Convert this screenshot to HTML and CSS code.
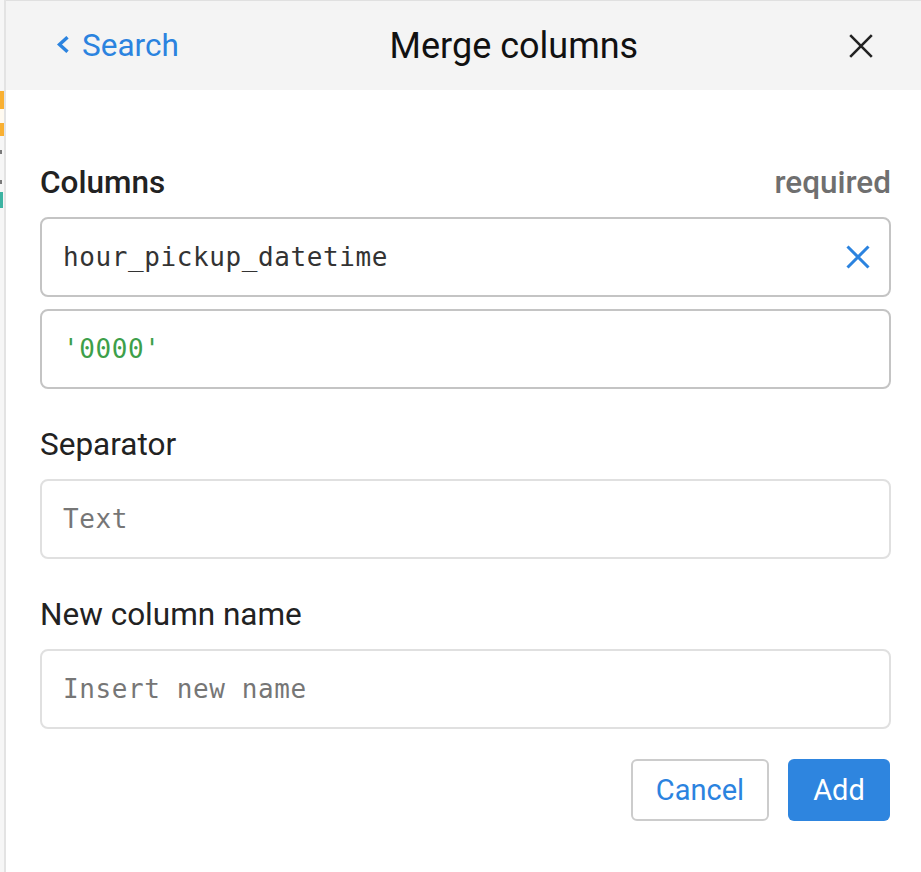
FILE: index.html
```html
<!DOCTYPE html>
<html lang="en">
<head>
<meta charset="utf-8">
<title>Merge columns</title>
<link rel="stylesheet" href="styles.css">
</head>
<body>
<div class="page">
  <div class="strip">
    <div class="mark mark-orange-1"></div>
    <div class="mark mark-white"></div>
    <div class="mark mark-orange-2"></div>
    <div class="mark mark-dot mark-dot-1"></div>
    <div class="mark mark-dot mark-dot-2"></div>
    <div class="mark mark-teal"></div>
  </div>
  <div class="panel">
    <header class="header">
      <a class="back" href="#">
        <svg class="chev" width="13" height="17" viewBox="0 0 13 17"><path d="M11.5 1.2 L3.5 8.5 L11.5 15.8" fill="none" stroke="currentColor" stroke-width="3.4" stroke-linecap="butt" stroke-linejoin="miter"/></svg>
        <span>Search</span>
      </a>
      <h1 class="title">Merge columns</h1>
      <button class="close" aria-label="Close">
        <svg width="24" height="24" viewBox="0 0 24 24"><path d="M1.2 1.2 L22.8 22.8 M22.8 1.2 L1.2 22.8" stroke="#222" stroke-width="2.6" fill="none"/></svg>
      </button>
    </header>
    <main class="body">
      <section class="group">
        <div class="label-row">
          <span class="label label-strong">Columns</span>
          <span class="required">required</span>
        </div>
        <div class="stack">
          <div class="field field-dark">
            <span class="value">hour_pickup_datetime</span>
            <svg class="clear" width="24" height="24" viewBox="0 0 24 24"><path d="M1.5 1.5 L22.5 22.5 M22.5 1.5 L1.5 22.5" stroke="#2b83df" stroke-width="3" fill="none"/></svg>
          </div>
          <div class="field field-dark">
            <span class="value value-green">'0000'</span>
          </div>
        </div>
      </section>
      <section class="group">
        <div class="label-row"><span class="label">Separator</span></div>
        <div class="field field-light"><span class="placeholder">Text</span></div>
      </section>
      <section class="group">
        <div class="label-row"><span class="label">New column name</span></div>
        <div class="field field-light"><span class="placeholder">Insert new name</span></div>
      </section>
      <div class="actions">
        <button class="btn btn-cancel">Cancel</button>
        <button class="btn btn-add">Add</button>
      </div>
    </main>
  </div>
</div>
</body>
</html>
```

FILE: styles.css
```css
* { box-sizing: border-box; }
html, body { margin: 0; padding: 0; background: #fff; }
body {
  font-family: Roboto, "Noto Sans", "Liberation Sans", sans-serif;
  color: #212121;
  width: 921px;
  height: 872px;
  overflow: hidden;
}
.page {
  display: flex;
  height: 872px;
}
.strip {
  width: 6px;
  flex: none;
  background: #f6f6f6;
  border-right: 2px solid #e3e3e3;
  display: flex;
  flex-direction: column;
}
.mark { width: 4px; flex: none; }
.mark-orange-1 { margin-top: 91px; height: 18px; background: #f9b032; }
.mark-white { height: 14px; background: #fffaf0; }
.mark-orange-2 { height: 13px; background: #f9b032; }
.mark-dot { width: 2px; height: 4px; background: #7a7a7a; }
.mark-dot-1 { margin-top: 14px; }
.mark-dot-2 { margin-top: 26px; }
.mark-teal { margin-top: 8px; height: 16px; width: 3px; background: #3cb3a2; }

.panel {
  flex: 1;
  display: flex;
  flex-direction: column;
}
.header {
  height: 90px;
  background: #f4f4f4;
  border-top: 1px solid #e0e0e0;
  display: flex;
  align-items: center;
  padding: 0 48px 0 50px;
}
.back {
  display: flex;
  align-items: center;
  gap: 13px;
  color: #2b83df;
  text-decoration: none;
  font-size: 31.5px;
  flex: none;
}
.chev { display: block; margin-top: -2px; }
.title {
  flex: 1;
  margin: 0;
  text-align: center;
  font-size: 36px;
  font-weight: 400;
  color: #111;
}
.close {
  flex: none;
  display: flex;
  background: none;
  border: 0;
  padding: 0;
  margin-top: 1px;
}
.close svg { display: block; }

.body {
  padding: 77px 30px 0 34px;
  display: flex;
  flex-direction: column;
}
.group { margin-bottom: 40px; }
.group:last-of-type { margin-bottom: 0; }
.label-row {
  display: flex;
  justify-content: space-between;
  align-items: baseline;
  height: 32px;
  margin-bottom: 18px;
}
.label {
  font-size: 31.5px;
  line-height: 32px;
  color: #222;
}
.label-strong { font-weight: 500; }
.required {
  font-size: 31.5px;
  line-height: 32px;
  font-weight: 500;
  color: #6f6f6f;
}
.stack {
  display: flex;
  flex-direction: column;
  gap: 12px;
}
.field {
  height: 80px;
  border-radius: 8px;
  display: flex;
  align-items: center;
  justify-content: space-between;
  padding: 0 19px 0 21px;
  font-family: "DejaVu Sans Mono", "Liberation Mono", monospace;
  font-size: 26px;
  letter-spacing: 0.6px;
}
.field-dark { border: 2px solid #c4c4c4; }
.field-light { border: 2px solid #e0e0e0; }
.value { color: #333; }
.value-green { color: #3d9f4a; }
.placeholder { color: #767676; }
.clear { display: block; }

.actions {
  margin-top: 30px;
  display: flex;
  justify-content: flex-end;
  gap: 19px;
  padding-right: 1px;
}
.btn {
  height: 62px;
  border-radius: 6px;
  font-family: Roboto, "Noto Sans", sans-serif;
  font-size: 29px;
  font-weight: 400;
  padding: 0;
}
.btn-cancel {
  width: 138px;
  background: #fff;
  border: 2px solid #cccccc;
  color: #2b83df;
}
.btn-add {
  width: 102px;
  background: #2e85df;
  border: 0;
  color: #fff;
}
```
